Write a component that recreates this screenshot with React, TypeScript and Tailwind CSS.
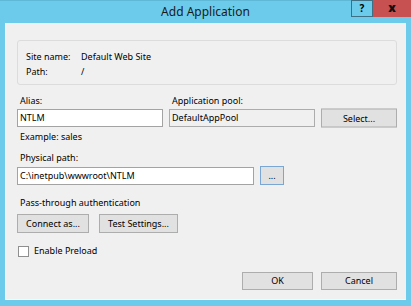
import React from "react";

const FONT = "font-['Noto_Sans',sans-serif]";

function Btn({ label, className = "" }: { label: string; className?: string }) {
  return (
    <button
      className={`flex items-center justify-center border border-[#adadad] bg-[#e1e1e1] text-[9px] leading-[12px] text-black ${className}`}
    >
      {label}
    </button>
  );
}

function Field({ value, className = "", readOnly = false }: { value: string; className?: string; readOnly?: boolean }) {
  return (
    <div
      className={`flex h-[18px] items-center border pl-[2px] text-[9px] leading-[12px] text-black ${
        readOnly ? "border-[#acacac] bg-[#f0f0f0]" : "border-[#a3a3a3] bg-white"
      } ${className}`}
    >
      {value}
    </div>
  );
}

export default function App() {
  return (
    <div className={`flex h-[306px] w-[411px] flex-col bg-[#6ccbea] ${FONT}`}>
      {/* title bar */}
      <div className="grid h-[23px] grid-cols-[1fr_auto_1fr] border-t border-[#5fb8d6]">
        <div />
        <div className="pt-[3px] text-[12px] leading-[15px] text-[#1a1a1a]">Add Application</div>
        <div className="flex items-start justify-end">
          <div className="mt-[-1px] flex h-[17px] w-[22px] items-center justify-center border border-[#3f6f82] text-[10px] font-bold text-black">
            ?
          </div>
          <div className="mt-[-1px] flex h-[17px] w-[38px] items-center justify-center bg-[#c75050] pb-[2px] text-[12px] font-black text-[#111]">
            x
          </div>
        </div>
      </div>

      {/* client */}
      <div className="mx-[5px] flex h-[277px] flex-col border-b border-l border-[#f8f8f8] bg-[#f0f0f0] pl-[11px] pr-[9px] text-[9px] leading-[12px] text-black">
        <div className="mt-[17px] h-[45px] rounded-[3px] border border-[#dcdcdc] pl-[8px] pt-[8px] leading-[15px]">
          <div className="flex">
            <span className="w-[55px]">Site name:</span>
            <span>Default Web Site</span>
          </div>
          <div className="flex">
            <span className="w-[55px]">Path:</span>
            <span>/</span>
          </div>
        </div>

        <div className="mt-[10px] flex gap-[6px]">
          <div className="flex w-[146px] flex-col">
            <span className="pl-[3px]">Alias:</span>
            <Field value="NTLM" className="mt-[2px]" />
          </div>
          <div className="flex w-[146px] flex-col">
            <span className="pl-[3px]">Application pool:</span>
            <Field value="DefaultAppPool" className="mt-[2px]" readOnly />
          </div>
          <div className="flex flex-col justify-end">
            <Btn label="Select..." className="h-[19px] w-[76px] translate-y-[0.5px]" />
          </div>
        </div>

        <div className="mt-[4px] pl-[3px]">Example: sales</div>

        <div className="mt-[9px] pl-[3px]">Physical path:</div>
        <div className="mt-[2px] flex items-center gap-[6px]">
          <Field value="C:\inetpub\wwwroot\NTLM" className="w-[237px]" />
          <button className="flex h-[19px] w-[24px] items-center justify-center border border-[#7aa6d4] bg-[#e1e1e1] text-[9px] leading-[12px]">
            ...
          </button>
        </div>

        <div className="mt-[12px] pl-[3px]">Pass-through authentication</div>
        <div className="mt-[5px] flex gap-[10px]">
          <Btn label="Connect as..." className="h-[19px] w-[72px]" />
          <Btn label="Test Settings..." className="h-[19px] w-[79px]" />
        </div>

        <div className="mt-[12px] flex items-center gap-[5px] pl-[1px]">
          <div className="h-[11px] w-[11px] border border-[#8f8f8f] bg-white" />
          <span>Enable Preload</span>
        </div>

        <div className="mt-[15px] flex justify-end gap-[8px]">
          <Btn label="OK" className="h-[18px] w-[71px]" />
          <Btn label="Cancel" className="h-[18px] w-[76px]" />
        </div>
      </div>
    </div>
  );
}
